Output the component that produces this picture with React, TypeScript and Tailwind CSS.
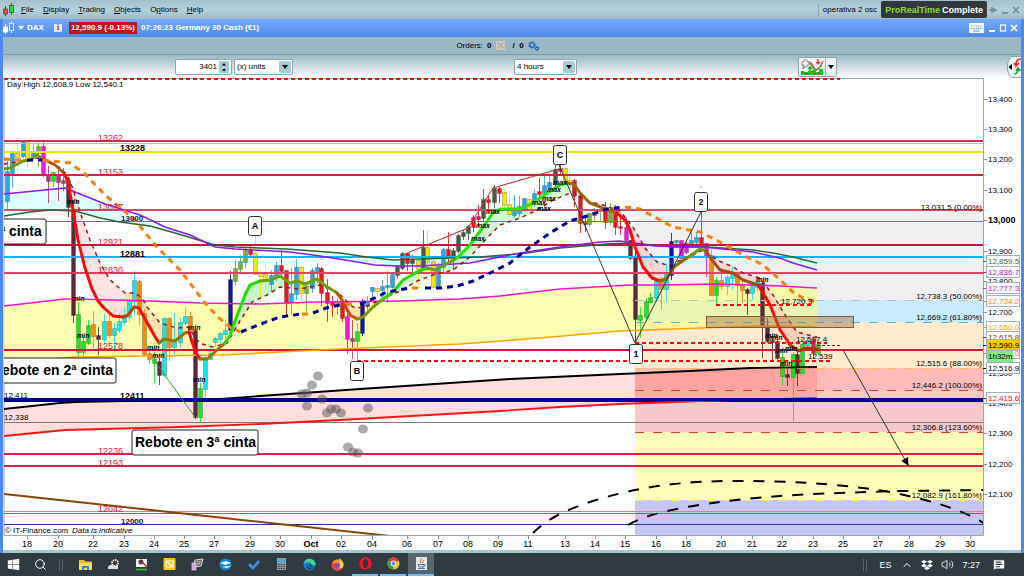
import React from "react";
import { FaDropbox, FaWindows } from "react-icons/fa";
import { Search, ChevronUp, Volume2, MessageSquareText } from "lucide-react";

type Pt = [number, number];
// x, body top, body bottom, wick top, wick bottom, colour key
type Candle = [number, number, number, number, number, string];

const COLORS: Record<string, string> = {
  b: "#2aa5e6", y: "#f0e614", g: "#6fb53a", m: "#f014e6", p: "#c0306c", l: "#14e81e", d: "#5a2a38",
  c: "#14e6f0", o: "#f08c14", n: "#1414a0", r: "#f01423", k: "#465a46",
};

const candles: Candle[] = [
  [7, 172, 201, 160, 211, "b"], [12, 154, 173, 150, 188, "b"], [17, 154, 157, 144, 173, "y"], [23, 142, 156, 141, 158, "b"],
  [27, 142, 161, 139, 169, "y"], [33, 153, 156, 145, 157, "b"], [38, 147, 153, 142, 167, "g"], [43, 147, 174, 142, 177, "m"],
  [48, 175, 181, 166, 203, "p"], [53, 173, 181, 172, 187, "l"], [58, 176, 182, 170, 201, "p"], [63, 181, 183, 168, 191, "p"],
  [68, 181, 207, 178, 217, "d"], [73, 210, 315, 200, 323, "d"], [78, 315, 352, 302, 367, "l"], [83, 342, 352, 335, 367, "l"],
  [88, 326, 343, 320, 345, "l"], [93, 325, 336, 311, 348, "o"], [98, 336, 339, 327, 355, "d"], [104, 322, 339, 314, 345, "c"],
  [109, 322, 335, 313, 338, "o"], [114, 329, 335, 323, 352, "c"], [119, 322, 330, 313, 333, "c"], [124, 316, 322, 308, 326, "c"],
  [129, 301, 317, 298, 322, "c"], [134, 281, 301, 271, 316, "c"], [139, 282, 314, 280, 326, "o"], [144, 314, 354, 309, 357, "o"],
  [149, 354, 359, 351, 364, "o"], [154, 359, 363, 352, 383, "l"], [159, 362, 375, 358, 385, "d"], [164, 319, 375, 317, 377, "c"],
  [169, 319, 347, 317, 361, "o"], [174, 342, 347, 313, 356, "c"], [180, 323, 342, 318, 348, "c"], [185, 317, 323, 307, 325, "c"],
  [190, 317, 332, 312, 337, "o"], [195, 331, 417, 329, 419, "d"], [200, 389, 417, 383, 422, "l"], [205, 358, 389, 356, 398, "c"],
  [210, 354, 359, 347, 360, "c"], [215, 339, 342, 337, 347, "c"], [220, 334, 339, 332, 345, "c"], [225, 331, 334, 320, 338, "c"],
  [230, 280, 330, 271, 333, "n"], [235, 269, 281, 260, 285, "g"], [240, 262, 269, 255, 273, "g"], [245, 250, 262, 247, 268, "g"],
  [250, 250, 254, 246, 257, "r"], [255, 254, 274, 235, 275, "y"], [260, 274, 276, 270, 301, "y"], [265, 275, 279, 262, 288, "y"],
  [271, 276, 284, 270, 292, "b"], [276, 266, 277, 262, 281, "b"], [281, 266, 271, 250, 277, "r"], [286, 271, 302, 271, 316, "r"],
  [291, 294, 302, 268, 315, "b"], [296, 268, 294, 259, 300, "b"], [301, 268, 293, 266, 302, "y"], [306, 287, 293, 285, 313, "g"],
  [312, 271, 288, 268, 293, "b"], [317, 268, 271, 263, 283, "b"], [321, 269, 293, 267, 306, "r"], [327, 293, 303, 279, 322, "r"],
  [332, 303, 305, 296, 317, "r"], [337, 303, 305, 298, 315, "g"], [342, 303, 318, 300, 322, "r"], [347, 317, 339, 310, 354, "m"],
  [352, 339, 341, 320, 359, "p"], [357, 332, 341, 323, 360, "l"], [362, 304, 333, 299, 336, "n"], [367, 302, 306, 296, 310, "b"],
  [372, 288, 291, 287, 300, "b"], [377, 289, 291, 280, 298, "y"], [382, 287, 290, 280, 297, "b"], [387, 286, 287, 271, 303, "b"],
  [392, 275, 287, 273, 289, "b"], [397, 267, 275, 266, 278, "k"], [402, 254, 268, 252, 270, "k"], [407, 254, 263, 253, 271, "r"],
  [412, 260, 263, 255, 273, "k"], [418, 261, 269, 260, 288, "y"], [423, 248, 269, 230, 271, "k"], [427, 248, 262, 230, 267, "y"],
  [433, 262, 287, 260, 293, "y"], [438, 267, 287, 263, 288, "b"], [443, 250, 267, 248, 273, "b"], [448, 250, 256, 232, 263, "r"],
  [453, 251, 256, 248, 270, "k"], [458, 236, 251, 234, 253, "k"], [463, 233, 236, 230, 240, "k"], [468, 227, 233, 225, 240, "k"],
  [473, 218, 227, 215, 232, "r"], [478, 217, 219, 205, 227, "r"], [483, 200, 218, 189, 222, "k"], [488, 200, 202, 195, 213, "r"],
  [494, 189, 202, 185, 208, "k"], [499, 189, 193, 187, 203, "r"], [504, 193, 205, 190, 208, "y"], [509, 205, 214, 190, 217, "y"],
  [514, 212, 215, 195, 218, "b"], [519, 207, 213, 196, 217, "b"], [524, 199, 208, 198, 209, "b"], [529, 200, 209, 199, 212, "y"],
  [534, 194, 202, 190, 207, "b"], [539, 192, 194, 178, 202, "r"], [544, 186, 193, 175, 197, "b"], [549, 183, 187, 173, 192, "b"],
  [555, 170, 184, 165, 187, "k"], [560, 169, 171, 163, 176, "r"], [565, 169, 181, 167, 185, "y"], [569, 181, 183, 170, 190, "y"],
  [574, 181, 196, 179, 207, "r"], [580, 196, 223, 195, 233, "r"], [585, 223, 224, 217, 232, "r"], [589, 214, 224, 213, 227, "g"],
  [594, 213, 215, 208, 221, "g"], [600, 210, 211, 208, 222, "g"], [605, 211, 222, 202, 229, "r"], [610, 210, 222, 203, 225, "g"],
  [615, 211, 227, 205, 235, "r"], [620, 227, 228, 217, 235, "r"], [626, 228, 240, 217, 242, "m"], [630, 241, 258, 240, 260, "d"],
  [635, 258, 319, 250, 343, "d"], [640, 316, 320, 307, 338, "l"], [646, 302, 317, 298, 322, "l"], [650, 298, 302, 293, 303, "l"],
  [656, 282, 298, 280, 302, "c"], [661, 282, 289, 277, 309, "o"], [666, 274, 289, 263, 302, "c"], [671, 242, 275, 233, 280, "n"],
  [676, 241, 242, 240, 248, "b"], [681, 241, 258, 240, 259, "m"], [686, 244, 252, 242, 254, "m"], [691, 241, 244, 230, 247, "b"],
  [696, 238, 242, 232, 247, "b"], [701, 238, 244, 212, 248, "r"], [706, 244, 256, 243, 277, "m"], [711, 256, 295, 250, 296, "o"],
  [716, 281, 295, 277, 305, "l"], [721, 281, 286, 268, 290, "o"], [727, 278, 286, 275, 295, "c"], [732, 274, 278, 267, 290, "c"],
  [737, 273, 285, 272, 305, "o"], [742, 285, 290, 280, 303, "o"], [747, 290, 293, 288, 315, "d"], [752, 287, 293, 283, 300, "c"],
  [757, 282, 287, 280, 291, "c"], [762, 284, 326, 282, 358, "d"], [767, 326, 341, 318, 343, "d"], [772, 341, 342, 338, 360, "d"],
  [777, 342, 358, 340, 362, "d"], [782, 358, 376, 353, 385, "l"], [787, 375, 377, 368, 386, "d"], [793, 355, 377, 352, 421, "l"],
  [797, 355, 373, 352, 386, "d"], [802, 345, 373, 343, 374, "l"], [807, 341, 345, 338, 350, "c"], [813, 341, 353, 337, 358, "p"],
  [818, 345, 353, 343, 355, "l"],
];

const pink: Pt[] = [[4, 306], [65, 299], [75, 299], [150, 301], [200, 303], [260, 304], [317, 302], [400, 301], [460, 299], [500, 296], [560, 289], [630, 285], [660, 285], [720, 284], [780, 286], [817, 288]];
const orange: Pt[] = [[4, 365], [40, 360], [75, 357], [150, 356], [220, 355], [260, 353], [340, 349], [460, 344], [540, 338], [620, 331], [700, 328], [760, 326], [817, 327]];
const black: Pt[] = [[4, 409], [60, 403], [75, 402], [220, 399], [260, 396], [360, 389], [510, 379], [620, 374], [690, 371], [750, 368], [817, 367]];
const red: Pt[] = [[4, 436], [65, 430], [180, 427], [260, 424], [340, 420], [500, 411], [560, 407], [620, 404], [700, 401], [817, 398]];
const purple: Pt[] = [[4, 194], [45, 190], [65, 188], [75, 192], [105, 204], [140, 215], [165, 227], [190, 235], [215, 247], [235, 249], [290, 252], [320, 256], [345, 260], [375, 265], [400, 266], [420, 266], [470, 263], [520, 253], [560, 247], [600, 242], [620, 241], [655, 246], [703, 247], [753, 252], [780, 258], [793, 263], [817, 270]];
const green: Pt[] = [[4, 216], [30, 212], [50, 210], [75, 211], [100, 218], [120, 222], [150, 226], [175, 233], [195, 239], [215, 245], [235, 247], [287, 249], [340, 253], [367, 257], [393, 260], [420, 259], [480, 257], [527, 253], [560, 248], [607, 244], [630, 243], [673, 247], [707, 247], [753, 250], [773, 253], [793, 257], [817, 263]];

const slow: Pt[] = [
  [4, 164], [30, 160], [42, 157], [62, 169], [68, 177], [73, 189], [80, 212], [90, 240], [100, 263], [110, 280], [125, 293], [135, 293], [142, 298],
  [147, 307], [160, 323], [177, 328], [188, 327], [197, 340], [202, 344], [213, 347], [227, 343], [240, 321], [252, 302], [267, 295], [280, 287],
  [300, 289], [320, 285], [337, 292], [353, 307], [363, 308], [380, 300], [400, 291], [417, 281], [433, 275], [453, 270], [470, 257], [487, 238],
  [500, 225], [520, 218], [537, 210], [553, 200], [573, 192], [587, 201], [603, 205], [620, 211], [633, 227], [645, 248], [657, 262], [667, 265],
  [687, 258], [703, 250], [717, 260], [733, 267], [743, 273], [760, 278], [773, 295], [787, 318], [797, 332], [817, 337],
];

// fast average, one entry for each stretch of a single colour
const fast: { color: string; pts: Pt[] }[] = [
  { color: "#76960a", pts: [[4, 169], [10, 168], [23, 161], [30, 160], [37, 155], [43, 159]] },
  { color: "#b45a0a", pts: [[43, 159], [55, 165], [64, 173]] },
  { color: "#fa0a0a", pts: [[64, 173], [68, 182], [73, 210], [78, 240], [85, 268], [92, 289], [98, 301], [103, 307], [113, 316], [123, 317]] },
  { color: "#b4460a", pts: [[123, 317], [128, 315], [134, 307], [139, 308]] },
  { color: "#fa0a0a", pts: [[139, 308], [144, 317], [154, 335], [159, 343]] },
  { color: "#8c780a", pts: [[159, 343], [164, 339], [175, 341], [185, 333], [189, 332]] },
  { color: "#fa0a0a", pts: [[189, 332], [192, 342], [196, 353], [200, 359]] },
  { color: "#96780a", pts: [[200, 359], [207, 359], [217, 350], [225, 343]] },
  { color: "#23dc0a", pts: [[225, 343], [230, 335], [235, 321], [240, 308], [245, 295], [250, 285], [260, 281]] },
  { color: "#6ea00a", pts: [[260, 281], [270, 280], [280, 276], [290, 283], [297, 281], [305, 284], [317, 279], [323, 284], [337, 293]] },
  { color: "#d2460a", pts: [[337, 293], [342, 300], [350, 315], [357, 319]] },
  { color: "#789609", pts: [[357, 319], [363, 317], [373, 307], [383, 299]] },
  { color: "#23dc0a", pts: [[383, 299], [393, 292], [403, 280], [417, 272], [427, 268]] },
  { color: "#6ea00a", pts: [[427, 268], [435, 270], [448, 263], [457, 258]] },
  { color: "#23e60a", pts: [[457, 258], [470, 245], [483, 227], [493, 213], [500, 209], [520, 209], [533, 203], [547, 193], [560, 185], [567, 183]] },
  { color: "#a0640a", pts: [[567, 183], [574, 184], [580, 193], [590, 203], [603, 208], [617, 213]] },
  { color: "#fa0a0a", pts: [[617, 213], [625, 220], [630, 230], [635, 247], [643, 267], [652, 278], [660, 281]] },
  { color: "#96640a", pts: [[660, 281], [666, 279], [675, 266], [687, 258]] },
  { color: "#6e960a", pts: [[687, 258], [700, 249], [706, 251]] },
  { color: "#aa4b14", pts: [[706, 251], [712, 260], [720, 270], [733, 273], [743, 280], [758, 285]] },
  { color: "#fa0a0a", pts: [[758, 285], [763, 293], [770, 305], [780, 330], [787, 340], [790, 345]] },
  { color: "#b4320f", pts: [[790, 345], [798, 351], [807, 348], [818, 349]] },
];
const fastAll: Pt[] = fast.flatMap((s) => s.pts);

const bands: { color: string; pts: Pt[] }[] = [
  { color: "#ff7d0a", pts: [[4, 159], [15, 160], [26, 160]] },
  { color: "#00008c", pts: [[27, 160], [42, 160]] },
  { color: "#ff7d0a", pts: [[43, 160], [70, 163], [85, 174], [105, 195], [135, 220], [155, 245], [180, 270], [205, 303], [218, 317], [230, 327], [240, 332]] },
  { color: "#00008c", pts: [[241, 332], [258, 325], [280, 317], [301, 314]] },
  { color: "#ff7d0a", pts: [[302, 314], [309, 314]] },
  { color: "#00008c", pts: [[313, 313], [326, 308], [344, 304]] },
  { color: "#ff7d0a", pts: [[346, 304], [352, 304]] },
  { color: "#00008c", pts: [[360, 304], [377, 297], [387, 292], [410, 288]] },
  { color: "#ff7d0a", pts: [[412, 288], [419, 288]] },
  { color: "#00008c", pts: [[425, 288], [440, 288], [457, 286], [473, 281], [490, 273], [510, 263], [530, 247], [550, 233], [570, 221], [587, 216], [607, 209], [623, 207]] },
  { color: "#ff7d0a", pts: [[625, 207], [640, 209], [647, 213], [673, 227], [700, 232], [720, 242], [743, 255], [763, 265], [777, 277], [793, 292], [803, 298], [817, 302]] },
];

const clouds: { from: number; to: number; fill: string }[] = [
  { from: 66, to: 124, fill: "#ffdede" },
  { from: 124, to: 189, fill: "#ffdcaa" },
  { from: 189, to: 202, fill: "#ffdede" },
  { from: 226, to: 336, fill: "#bef5be" },
  { from: 336, to: 365, fill: "#ffdcaa" },
  { from: 380, to: 573, fill: "#c8fac8" },
  { from: 617, to: 668, fill: "#ffcdcd" },
  { from: 703, to: 763, fill: "#fad2d2" },
  { from: 758, to: 819, fill: "#ffcdb4" },
];

const zones = [
  { y: 210, h: 90, fill: "#f0f0f0", line: "#8c1428" },
  { y: 300, h: 22, fill: "#c8ebff", line: "#bebebe" },
  { y: 322, h: 46, fill: "#ffebcd", line: "#50b4e6" },
  { y: 368, h: 22, fill: "#ffbaba", line: "#ffbe50" },
  { y: 390, h: 42, fill: "#f6c8cc", line: "#dc3c46" },
  { y: 432, h: 68, fill: "#ffffb9", line: "#dc3c46" },
  { y: 500, h: 35, fill: "#c6c6f5", line: "#f5f050" },
];

const fibs: [number, string][] = [
  [210, "13,031.5 (0.00%)"], [299, "12,738.3 (50.00%)"], [320, "12,669.2 (61.80%)"], [366, "12,515.6 (88.00%)"],
  [388, "12,446.2 (100.00%)"], [430, "12,306.8 (123.60%)"], [498, "12,082.9 (161.80%)"],
];

const levels: { y: number; color: string; w: number; label?: string; cls?: string; x?: number; ty?: number }[] = [
  { y: 141, color: "#dc2850", w: 2, label: "13262", cls: "fill-[#dc143c] text-[9px]", x: 98 },
  { y: 143, color: "#f0a0af", w: 1 },
  { y: 152, color: "#e6e60a", w: 2, label: "13228", cls: "fill-black text-[9px] font-bold", x: 120, ty: 151 },
  { y: 175, color: "#dc1e41", w: 2, label: "13153", cls: "fill-[#dc143c] text-[9px]", x: 98 },
  { y: 210, color: "#e1466a", w: 2, label: "13037", cls: "fill-[#dc143c] text-[9px]", x: 98 },
  { y: 221, color: "#6e6ec8", w: 1, label: "13000", cls: "fill-[#1e1e3c] text-[8px] font-bold", x: 121 },
  { y: 245, color: "#c8143c", w: 2, label: "12921", cls: "fill-[#dc143c] text-[9px]", x: 98 },
  { y: 257, color: "#00b9fa", w: 2, label: "12881", cls: "fill-black text-[9px] font-bold", x: 120 },
  { y: 273, color: "#dc4664", w: 2, label: "12830", cls: "fill-[#dc143c] text-[9px]", x: 98 },
  { y: 350, color: "#dc143c", w: 2, label: "12578", cls: "fill-[#dc143c] text-[9px]", x: 98, ty: 349 },
  { y: 400, color: "#000096", w: 3, label: "12411", cls: "fill-black text-[9px] font-bold", x: 120, ty: 399 },
  { y: 422, color: "#827878", w: 1 },
  { y: 454, color: "#e61e46", w: 2, label: "12236", cls: "fill-[#dc143c] text-[9px]", x: 98 },
  { y: 466, color: "#e61e46", w: 2, label: "12193", cls: "fill-[#dc143c] text-[9px]", x: 98 },
  { y: 511, color: "#eb788c", w: 1, label: "12042", cls: "fill-[#dc143c] text-[9px]", x: 98, ty: 512 },
  { y: 513, color: "#dc3c5f", w: 1 },
  { y: 524, color: "#3232aa", w: 1, label: "12000", cls: "fill-[#141428] text-[8px] font-bold", x: 121 },
];

const signals: [number, number, string][] = [
  [67, 204, "min"], [72, 301, "min"], [77, 338, "min"], [147, 350, "min"], [152, 358, "min"], [188, 330, "min"], [193, 382, "min"],
  [486, 214, "max"], [476, 228, "max"], [471, 241, "max"], [553, 185, "max"], [547, 192, "max"], [542, 201, "max"], [532, 205, "max"],
  [537, 211, "max"], [756, 282, "min"], [765, 338, "min"], [770, 340, "min"], [775, 353, "min"], [785, 351, "min"], [780, 366, "min"],
];

const marks: [number, number, string][] = [[255, 226, "A"], [357, 371, "B"], [560, 155, "C"], [636, 354, "1"], [701, 202, "2"]];

const days: [number, string][] = [
  [27, "18"], [58, "20"], [93, "22"], [124, "23"], [154, "24"], [184, "25"], [214, "27"], [250, "29"], [280, "30"], [311, "Oct"], [341, "02"],
  [372, "04"], [407, "06"], [438, "07"], [468, "08"], [498, "09"], [528, "11"], [565, "13"], [595, "14"], [625, "15"], [656, "16"], [686, "18"],
  [721, "20"], [752, "21"], [782, "22"], [813, "23"], [843, "25"], [878, "27"], [909, "28"], [940, "29"], [970, "30"],
];

const tags: [number, string, string, string][] = [
  [353, "12,539.0", "#e67850", "#fff"], [261, "12,859.5", "#3c643c", "#fff"], [272, "12,836.7", "#a014f0", "#fff"], [288, "12,777.3", "#f014c8", "#fff"],
  [301, "12,734.2", "#f58214", "#fff"], [327, "12,650.0", "#ffa500", "#fff"], [337, "12,615.8", "#a01428", "#fff"],
  [345, "12,590.9", "#000", "#f5c800"], [368, "12,516.9", "#000", "#fff"], [398, "12,415.6", "#f00a0a", "#fff"],
];

const dots: Pt[] = [[302, 394], [307, 406], [312, 385], [318, 376], [307, 393], [322, 399], [327, 413], [331, 409], [336, 409], [341, 413], [348, 447], [353, 452], [358, 453], [363, 429], [368, 408]];

const toPath = (pts: Pt[]) => "M" + pts.map((p) => p.join(" ")).join("L");

const yAt = (pts: Pt[], x: number) => {
  const i = pts.findIndex((p) => p[0] >= x);
  if (i < 0) return pts[pts.length - 1][1];
  if (i === 0) return pts[0][1];
  const [x0, y0] = pts[i - 1];
  const [x1, y1] = pts[i];
  return x1 === x0 ? y1 : y0 + ((y1 - y0) * (x - x0)) / (x1 - x0);
};

const between = (a: Pt[], b: Pt[], from = 4, to = 817) => {
  const cut = (pts: Pt[]): Pt[] => [[from, yAt(pts, from)], ...pts.filter((p) => p[0] > from && p[0] < to), [to, yAt(pts, to)]];
  return toPath([...cut(a), ...cut(b).reverse()]) + "Z";
};

const Note = ({ x, y, w, tx, children }: { x: number; y: number; w: number; tx: number; children: string }) => (
  <g>
    <rect x={x} y={y} width={w} height="25" rx="2" fill="#fff" stroke="#222" />
    <text x={tx} y={y + 17} className="text-[14px] font-bold">{children}</text>
  </g>
);

const Chart = () => (
  <svg viewBox="3 78 1018 472" className="block w-full bg-white" role="img" aria-label="DAX 4 hours">
    <defs>
      <clipPath id="plot"><rect x="4" y="78" width="979" height="457" /></clipPath>
      <marker id="arrow" viewBox="0 0 8 8" refX="7" refY="4" markerWidth="8" markerHeight="8" orient="auto"><path d="M0 0L8 4L0 8Z" /></marker>
    </defs>
    <path d="M4 77V535.5H983.5V78.5H4" fill="none" stroke="#9aa8ae" />
    <g clipPath="url(#plot)" fill="none">
      {zones.map((z) => <rect key={z.y} x="635" y={z.y} width="348" height={z.h} fill={z.fill} />)}
      <path d={between(pink, orange)} fill="#ffff80" fillOpacity=".6" />
      <path d={between(black, red)} fill="#ff0000" fillOpacity=".13" />
      <path d={between(purple, green)} fill="#dcffff" fillOpacity=".9" />
      {clouds.map((c) => <path key={c.from} d={between(fastAll, slow, c.from, c.to)} fill={c.fill} fillOpacity=".85" />)}

      {candles.map(([x, top, bottom, high, low, k]) => (
        <g key={x} stroke={COLORS[k]}>
          <path d={`M${x + 0.5} ${high}V${low}`} strokeOpacity=".85" />
          <rect x={x - 1} y={top} width="3" height={Math.max(bottom - top, 1)} fill={COLORS[k]} />
          <rect x={x - 1.5} y={top - 0.5} width="4" height={Math.max(bottom - top, 1) + 1} stroke="#000" strokeOpacity=".2" />
        </g>
      ))}

      {zones.map((z) => <path key={z.y} d={`M635 ${z.y + 0.5}H983`} stroke={z.line} strokeDasharray="9 9" />)}
      {levels.map((l) => <path key={l.y} d={`M4 ${l.w % 2 ? l.y + 0.5 : l.y}H983`} stroke={l.color} strokeWidth={l.w} />)}

      <path d={toPath(pink)} stroke="#fa14c8" strokeWidth="1.6" />
      <path d={toPath(orange)} stroke="#ffa500" strokeWidth="1.6" />
      <path d={toPath(black)} stroke="#000" strokeWidth="1.8" />
      <path d={toPath(red)} stroke="#ff1414" strokeWidth="1.8" />
      <path d={toPath(green)} stroke="#326432" strokeWidth="1.4" />
      <path d={toPath(purple)} stroke="#9614f0" strokeWidth="1.4" />
      <path d="M4 399.5H983" stroke="#000096" strokeWidth="3" />
      <path d={toPath(slow)} stroke="#a01423" strokeWidth="1.5" strokeDasharray="4 4" />
      {fast.map((s) => <path key={s.pts[0][0]} d={toPath(s.pts)} stroke={s.color} strokeWidth="3" strokeLinejoin="round" strokeLinecap="round" />)}
      {bands.map((b) => <path key={b.pts[0][0]} d={toPath(b.pts)} stroke={b.color} strokeWidth="3" strokeDasharray="6 5" />)}

      <rect x="706.5" y="316.5" width="147" height="11" fill="#a06e46" fillOpacity=".45" stroke="#8c5a2d" />
      <path d="M4 79H840" stroke="#fa0a0a" strokeWidth="2" strokeDasharray="4 3" />
      <path d="M357 361H833M635 343H827M716 305H811" stroke="#fa0a0a" strokeWidth="2" strokeDasharray="4 3" />
      <path d="M817 345.5H842M780 367.5H817" stroke="#222" strokeDasharray="3 2" />
      <path d="M559 165L635 343L701 212" stroke="#333" />
      <path d="M154 360L195 417" stroke="#28a028" />
      <path d="M405 254L468 228L493 188L559 169" stroke="#c81e28" />
      <path d="M4 494L390 536" stroke="#82460a" strokeWidth="2" />
      <path d="M843 350L908 465" stroke="#333" markerEnd="url(#arrow)" />
      <path d="M533 533C550 516 572 508 593 501C650 483 700 481 735 481C790 481 830 483 885 491C925 499 960 508 985 524" stroke="#000" strokeWidth="2" strokeDasharray="11 10" />
      <path d="M628 525C650 512 690 506 720 502C770 495 830 493 900 491L985 490" stroke="#000" strokeWidth="2" strokeDasharray="11 10" />
      {dots.map(([x, y]) => <ellipse key={`${x}-${y}`} cx={x} cy={y} rx="5" ry="4.5" fill="#555" fillOpacity=".5" />)}
      <circle cx="701" cy="187" r=".6" fill="#333" />
    </g>

    <g clipPath="url(#plot)" className="text-[8px]">
      {levels.filter((l) => l.label).map((l) => <text key={l.y} x={l.x} y={l.ty ?? l.y} className={l.cls}>{l.label}</text>)}
      {signals.map(([x, y, t]) => <text key={`${x}-${y}`} x={x} y={y} className="text-[7px] font-bold italic">{t}</text>)}
      {fibs.map(([y, t]) => <text key={y} x="982" y={y} textAnchor="end">{t}</text>)}
      <text x="781" y="304">12,720.3</text>
      <text x="796" y="342">12,597.4</text>
      <text x="808" y="359">12,539</text>
      <text x="4" y="398">12,411</text>
      <text x="4" y="420">12,338</text>
      <text x="7" y="87">Day:High 12,608.9 Low 12,540.1</text>
      <text x="5" y="533">© IT-Finance.com</text>
      <text x="72" y="533" className="italic">Data is indicative</text>
      {marks.map(([x, y, t]) => (
        <g key={t}>
          <rect x={x - 6.5} y={y - 9.5} width="13" height="19" rx="2" fill="#fff" stroke="#333" />
          <text x={x} y={y + 3} textAnchor="middle" className="text-[9px] font-bold">{t}</text>
        </g>
      ))}
      <Note x={-10} y={219} w={56} tx={0}>ª cinta</Note>
      <Note x={-10} y={358} w={126} tx={2}>ebote en 2ª cinta</Note>
      <Note x={132} y={430} w={126} tx={135}>Rebote en 3ª cinta</Note>
    </g>

    <g className="text-[8px]">
      {[13400, 13300, 13200, 13100, 13000, 12900, 12800, 12700, 12500, 12400, 12300, 12200, 12100].map((v) => {
        const y = Math.round(98.5 + (13400 - v) * 0.3045);
        return (
          <g key={v}>
            <path d={`M983 ${y + 0.5}H987`} stroke="#8296a0" />
            <text x="988" y={y + 3} className={v === 13000 ? "text-[9px] font-bold" : ""}>{v.toLocaleString("en-US")}</text>
          </g>
        );
      })}
      {tags.map(([y, t, color, bg]) => (
        <g key={t}>
          <path d={`M983 ${y + 0.5}H987`} stroke={color} />
          <rect x="986.5" y={y - 5.5} width="33" height="11" fill={bg} stroke="#a0b4be" />
          <text x="988" y={y + 3} fill={color}>{t}</text>
        </g>
      ))}
      <rect x="987" y="351" width="26" height="11" fill="#87e687" />
      <text x="988" y="359">1h32m</text>
      {days.map(([x, t]) => (
        <g key={x}>
          <path d={`M${x + 0.5} 535V539`} stroke="#8296a0" />
          <text x={x} y="547" textAnchor="middle" className={t === "Oct" ? "text-[9px] font-bold" : "text-[9px]"}>{t}</text>
        </g>
      ))}
    </g>
  </svg>
);

const CandleIcon = ({ a, b, line }: { a: string; b: string; line: string }) => (
  <svg viewBox="0 0 12 14" className="h-3.5 w-3 shrink-0">
    <path d="M2.5 3V13M8.5 0V12" stroke={line} />
    <rect x=".5" y="6" width="4" height="5" fill={a} stroke={line} strokeWidth=".8" />
    <rect x="6.5" y="2.5" width="4" height="7" fill={b} stroke={line} strokeWidth=".8" />
  </svg>
);

const Caret = () => (
  <span className="pointer-events-none flex h-3 w-3 shrink-0 items-center justify-center rounded-xs bg-[#a9cad6]">
    <svg viewBox="0 0 6 4" className="h-1 w-1.5"><path d="M0 0H6L3 4Z" /></svg>
  </span>
);

const MENU = [["", "F", "ile"], ["", "D", "isplay"], ["", "T", "rading"], ["", "O", "bjects"], ["O", "p", "tions"], ["", "H", "elp"]];

const MenuBar = () => (
  <header className="flex h-[19px] items-center bg-linear-to-b from-[#a3c0cc] via-[#b4d0db] to-[#9fbcc8] pl-[3px]">
    <CandleIcon a="#e64646" b="#28dc32" line="#325a46" />
    <nav className="ml-1.5 flex gap-[9px]">
      {MENU.map(([pre, key, rest]) => (
        <button key={rest}>{pre}<u>{key}</u>{rest}</button>
      ))}
    </nav>
    <span className="ml-auto border-l border-[#8ca5af] px-1">operativa 2 osc</span>
    <span className="flex h-[17px] items-center gap-0.5 rounded-xs bg-[#30383e] px-1 text-[9px] font-bold text-white">
      <span className="text-[#8cdc28]">ProRealTime</span>Complete
    </span>
    <svg viewBox="0 0 32 10" className="mr-[3px] ml-0.5 h-2.5 w-8 stroke-[#6e8791]" fill="none" strokeWidth="1.4">
      <path d="M0 5H3M3 2V8M3 5H8M5 3V7M13 8H19M24 2L30 8M30 2L24 8" />
    </svg>
  </header>
);

const TitleBar = () => (
  <div className="flex h-[18px] items-center bg-linear-to-b from-[#74a9fc] to-[#4f8aea] font-bold text-white">
    <CandleIcon a="#fff" b="#5f98f3" line="#fff" />
    <svg viewBox="0 0 6 4" className="mx-[3px] h-1 w-1.5 fill-white"><path d="M0 0H6L3 4Z" /></svg>
    DAX
    <button aria-label="Information" className="ml-2.5 flex h-2 w-2 items-center justify-center bg-[#e8e4dc] font-serif text-[8px] leading-none text-[#555]">i</button>
    <span className="ml-[7px] bg-[#c3141e] px-0.5 leading-3">12,590.9 (-0.13%)</span>
    <span className="ml-1">07:26:23 Germany 30 Cash (€1)</span>
    <svg viewBox="0 0 50 12" className="ml-auto mr-0.5 h-3 w-[50px]" fill="none" stroke="#fff">
      <rect x="0" y="1" width="15" height="10" rx="1" fill="#fff" stroke="none" />
      <path d="M2 4H13M2 6.5H13" stroke="#4f8aea" strokeDasharray="1.3 1" />
      <path d="M4 9H11" stroke="#4f8aea" />
      <path d="M20 9H26" strokeWidth="2" /><rect x="31.5" y="3" width="5" height="6" strokeWidth="1.2" />
      <path d="M42 3L48 9M48 3L42 9" strokeWidth="1.7" />
    </svg>
  </div>
);

const Toolbar = () => (
  <div className="flex h-6 items-center border-t border-[#7d99a4] bg-linear-to-b from-[#9cb9c5] to-white">
    <div className="ml-[172px] flex gap-0.5">
      <label className="flex h-4 w-[57px] items-center rounded-xs border border-[#8ca5af] bg-white pr-0.5">
        <input aria-label="Number of units" defaultValue="3401" className="w-full min-w-0 text-right outline-none" />
        <svg viewBox="0 0 8 12" className="ml-0.5 h-3 w-2.5 shrink-0 bg-[#a9cad6]"><path d="M2 4.500L4 2L6 4.500ZM2 8L4 10.500L6 8Z" /></svg>
      </label>
      <label className="flex h-4 w-[59px] items-center rounded-xs border border-[#8ca5af] bg-white pr-px pl-0.5">
        <select aria-label="Units" className="w-full min-w-0 appearance-none outline-none"><option>(x) units</option></select>
        <Caret />
      </label>
    </div>
    <label className="ml-[221px] flex h-4 w-[63px] items-center rounded-xs border border-[#8ca5af] bg-white pr-px pl-0.5">
      <select aria-label="Timeframe" className="w-full min-w-0 appearance-none outline-none"><option>4 hours</option></select>
      <Caret />
    </label>
    <div className="ml-[221px] flex h-5 rounded-xs border border-[#8ca5af] bg-[#f0f4f5]">
      <button aria-label="Indicators" className="border-r border-[#a0b4be] px-px">
        <svg viewBox="0 0 24 18" className="h-[18px] w-6" fill="none">
          <path d="M1 13H4V14H8V13H12V12H16V14H19V11H23V17H1Z" fill="#1ebe1e" />
          <path d="M5 16H8M13 16H15M18 16H19" stroke="#f0283c" strokeWidth="2" />
          <path d="M3 11C7 3 10 2 13 8S19 12 23 3" stroke="#d25050" strokeWidth="1.3" />
          <path d="M2 8C6 2 10 4 13 10S18 10 22 7" stroke="#46aa46" strokeWidth="1.2" />
          <path d="M4 2H7V4H9V7H7V9H4V7H2V4H4Z" fill="#fff" stroke="#666" strokeWidth=".7" />
          <path d="M18 1V5M16 4L18 6L20 4" stroke="#f0283c" strokeWidth="1.2" />
          <path d="M10 13V9M8 11L10 9L12 11" stroke="#1eb41e" strokeWidth="1.4" />
        </svg>
      </button>
      <button aria-label="More indicators" className="flex w-2.5 items-center justify-center">
        <svg viewBox="0 0 6 4" className="h-1 w-1.5"><path d="M0 0H6L3 4Z" /></svg>
      </button>
    </div>
    <button aria-label="Open side panel" className="ml-auto">
      <svg viewBox="0 0 14 22" className="block h-[22px] w-3.5" fill="none">
        <path d="M14 .5H5Q1 3 .5 8V14Q1 19 5 21.500H14" fill="#eef4f6" stroke="#8ca5af" />
        <path d="M1.500 11L5 8V14Z" fill="#000" />
        <path d="M14 3Q9 3 9 9M7 7L9 10L12 7" stroke="#e62832" strokeWidth="1.6" />
        <path d="M7 18Q11 18 11 13M9 15L11 12L13.500 15" stroke="#1eaa28" strokeWidth="1.6" />
      </svg>
    </button>
  </div>
);

const APPS: { name: string; art: React.ReactNode; open?: boolean; active?: boolean }[] = [
  { name: "File Explorer", art: <><path d="M0 2H5L6.500 3.500H13V12H0Z" fill="#f7b92d" /><path d="M0 5H13V12H0Z" fill="#ffd75e" /><path d="M3 8H10V12H8V10H5V12H3Z" fill="#2c8ede" /></> },
  { name: "Device settings", art: <><path d="M1 9L3 7H11V11H1Z" fill="#e0e0e0" /><circle cx="8" cy="5" r="3" fill="#333" stroke="#eee" strokeWidth="1.8" strokeDasharray="1.5 .8" /></> },
  { name: "Editor", art: <><rect x="1" y="1" width="11" height="8" fill="#eee" /><circle cx="6" cy="4" r="2.500" fill="#444" /><path d="M7 4L12 9" stroke="#c83232" strokeWidth="1.6" /><path d="M1 11.500H12" stroke="#32c832" strokeWidth="1.5" /></> },
  { name: "Notes", art: <><rect x=".5" y="0" width="12" height="12" rx="1" fill="#ffc50f" /><path d="M3 3H10V9H3ZM3 3L10 9" fill="none" stroke="#fff" strokeWidth="1.2" /></> },
  { name: "Notepad", art: <><path d="M4 2L12 1L10 8L3 9Z" fill="#666" stroke="#ddd" /><path d="M6 4L10 3.500M6 6L9 5.500" stroke="#ddd" strokeWidth=".8" /><rect x="1" y="5" width="4" height="7" fill="#c8a0dc" stroke="#eee" strokeWidth=".6" /></> },
  { name: "Mail", art: <><circle cx="6.500" cy="6.500" r="6" fill="#1787d1" /><path d="M1 5L7 3L12 5L6 7ZM3 9L8 8L12 8L8 10Z" fill="#e8f5ff" /></> },
  { name: "To Do", art: <path d="M1 7L3 5L6 8L11 2L13 4L6 12Z" fill="#3b8eea" /> },
  { name: "Calculator", art: <><rect x="2" y="0" width="9" height="12" fill="#8a9ba8" /><path d="M3 1.500H10V4H3Z" fill="#3daee0" /><path d="M3 6.500H10M3 8.500H10M3 10.500H10" stroke="#2d383e" strokeWidth="1.2" strokeDasharray="1.500 1.200" /></> },
  { name: "Edge", art: <><circle cx="6.500" cy="6.500" r="6" fill="#1a83d2" /><path d="M1 5Q3 0 8 1Q13 3 12.500 7H7Q9 3 1 5Z" fill="#45cf9b" /><path d="M5 6Q5 11 11 10Q6 14 3 9Z" fill="#0b4f9c" /><path d="M6 6Q9 4 8.500 8.500L12 9Q7 11 6 6Z" fill="#2d383e" /></> },
  { name: "Firefox", art: <><circle cx="6.500" cy="7" r="5.800" fill="#ff8a1e" /><path d="M8 0Q14 4 12 9Q9 12 5 9Q10 7 8 0Z" fill="#ffd23c" /><circle cx="6.300" cy="7.500" r="2.700" fill="#7a4be0" /><path d="M1 3Q0 10 5 12Q9 13 12 10Q5 12 4 7Z" fill="#f0325a" /></> },
  { name: "Opera", open: true, art: <><circle cx="6.500" cy="6.500" r="6.200" fill="#f0142d" /><ellipse cx="6.500" cy="6.500" rx="2.600" ry="4.500" fill="#2d383e" /></> },
  { name: "Chrome", open: true, art: <><circle cx="6.500" cy="6.500" r="6" fill="#fbc116" /><path d="M6.500 6.500L1.300 3.500A6 6 0 0 1 11.700 3.500Z" fill="#e33b2e" /><path d="M6.500 6.500L1.300 3.500A6 6 0 0 0 6.500 12.500Z" fill="#27a348" /><circle cx="6.500" cy="6.500" r="2.600" fill="#4a8af4" stroke="#fff" /></> },
  { name: "ProRealTime", open: true, active: true, art: <><rect x="1" y="0" width="11" height="13" fill="#e4e8ea" /><path d="M6 6Q4 4 7 1M8 6Q7 4 9 3" stroke="#e66e28" fill="none" /><path d="M3 7.500H9V10H4ZM9 8H11M3 11.500H10" stroke="#4678a0" fill="none" /></> },
];

const Taskbar = () => (
  <footer className="flex h-[23px] items-center bg-[#303b41] text-white">
    <button aria-label="Start" className="ml-[7px]"><FaWindows size={13} /></button>
    <button aria-label="Search" className="ml-3.5"><Search size={13} strokeWidth={1.8} /></button>
    <span className="ml-3 h-3 w-1 border-x border-[#59636a]" />
    <div className="ml-2 flex h-full">
      {APPS.map((a) => (
        <button
          key={a.name}
          aria-label={a.name}
          className={`mx-px flex h-full w-[26px] items-center justify-center ${a.open ? "border-b-2 border-[#76b9ed]" : ""} ${a.active ? "bg-[#59656c]" : ""}`}
        >
          <svg viewBox="0 0 13 13" className="h-[13px] w-[13px]">{a.art}</svg>
        </button>
      ))}
    </div>
    <div className="ml-auto flex items-center gap-2 pr-[18px] text-[9px]">
      <span className="mr-1 h-3 w-1 border-x border-[#59636a]" />
      <span>ES</span>
      <ChevronUp size={12} className="ml-0.5" />
      <FaDropbox size={12} />
      <Volume2 size={13} strokeWidth={1.6} />
      <time>7:27</time>
      <MessageSquareText size={14} fill="#fff" stroke="#303b41" className="ml-1" />
    </div>
  </footer>
);

const App = () => {
  return (
    <div className="flex min-h-screen flex-col bg-[#303b41] font-['Liberation_Sans',Arial,sans-serif] text-[8px] leading-3 text-black">
      <MenuBar />
      <main className="border-x-3 border-[#4f8aea]">
        <TitleBar />
        <div className="flex h-[17px] items-center justify-center gap-1 bg-[#9ab7c3] pr-7 font-bold">
          <span className="font-normal">Orders:</span> 0
          <svg viewBox="0 0 9 9" className="h-[9px] w-[9px]"><rect width="9" height="9" fill="#ccc8c0" /><path d="M2 2L7 7M7 2L2 7" stroke="#999" /></svg>
          <span className="ml-1">/ &nbsp;0</span>
          <svg viewBox="0 0 12 10" className="h-2.5 w-3" fill="none" stroke="#1464c8">
            <circle cx="4" cy="4" r="2.500" strokeWidth="2" strokeDasharray="1.600 .4" /><circle cx="9" cy="7.500" r="1.500" strokeWidth="1.300" />
          </svg>
        </div>
        <Toolbar />
        <Chart />
        <div className="h-[3px] bg-[#a8c6d2]" />
      </main>
      <Taskbar />
    </div>
  );
};

export default App;
